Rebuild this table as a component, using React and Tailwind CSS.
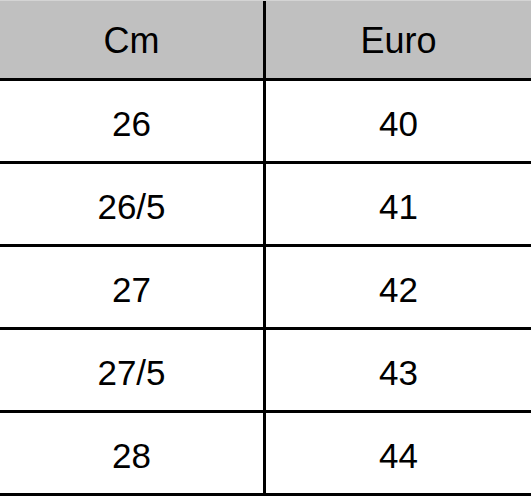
import React from 'react'

const rows = [
  ['26', '40'],
  ['26/5', '41'],
  ['27', '42'],
  ['27/5', '43'],
  ['28', '44'],
]

export default function App() {
  return (
    <div className="w-[531px] h-[496px] bg-white text-black font-['Liberation_Sans',Arial,sans-serif]">
      <div className="flex h-[81px] bg-[#c0c0c0] border-t border-[#d4d4d4] border-b-[3px] border-b-black text-[36px]">
        <div className="w-[263px] flex items-center justify-center pt-[3px]">Cm</div>
        <div className="flex-1 flex items-center justify-center border-l-[3px] border-black pt-[3px]">Euro</div>
      </div>
      {rows.map(([cm, eu]) => (
        <div key={cm} className="flex h-[83px] border-b-[3px] border-black text-[35px]">
          <div className="w-[263px] flex items-center justify-center pt-[6px]">{cm}</div>
          <div className="flex-1 flex items-center justify-center border-l-[3px] border-black pt-[6px]">{eu}</div>
        </div>
      ))}
    </div>
  )
}
